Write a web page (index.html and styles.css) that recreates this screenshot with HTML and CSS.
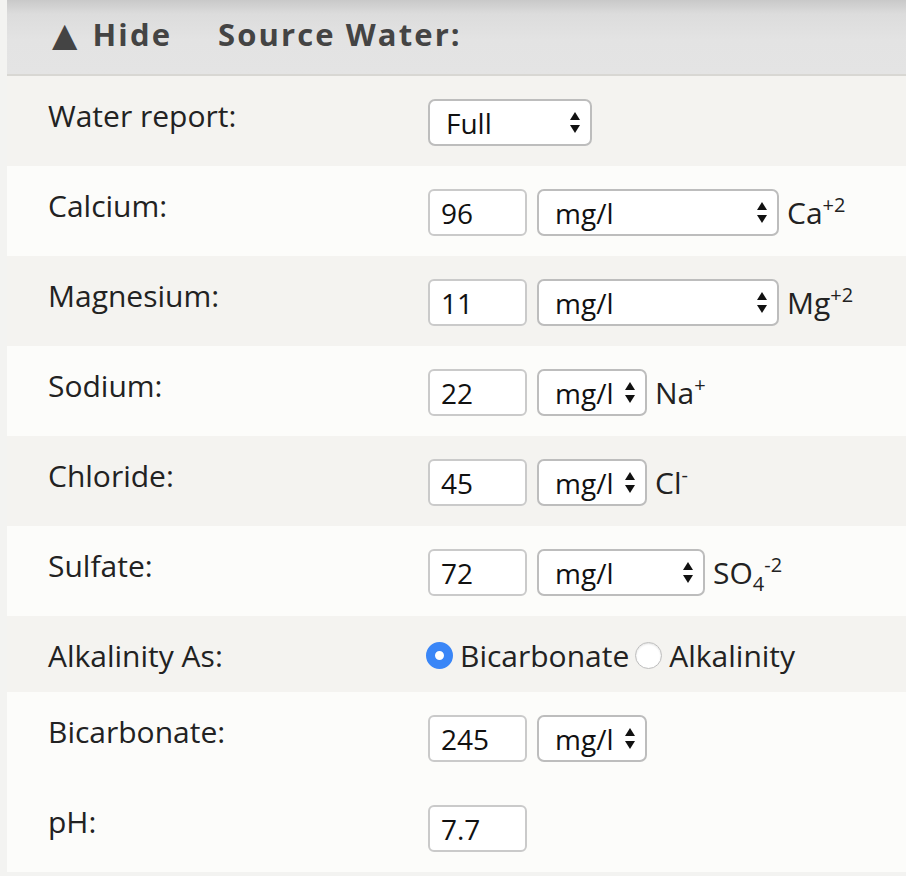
FILE: index.html
```html
<!DOCTYPE html>
<html>
<head>
<meta charset="utf-8">
<link rel="stylesheet" href="styles.css">
</head>
<body>
<div class="panel">
  <div class="header">
    <span class="toggle"><span class="tri">▲</span> Hide</span>
    <span class="title">Source Water:</span>
  </div>

  <div class="row odd">
    <div class="label">Water report:</div>
    <div class="ctrl">
      <span class="sel w-full"><select><option>Full</option></select><svg class="arr" viewBox="0 0 10 21"><path d="M5 0 L10 8 L0 8 Z M0 13 L10 13 L5 21 Z"/></svg></span>
    </div>
  </div>

  <div class="row even">
    <div class="label">Calcium:</div>
    <div class="ctrl">
      <input class="num" type="text" value="96">
      <span class="sel w-long"><select><option>mg/l</option></select><svg class="arr" viewBox="0 0 10 21"><path d="M5 0 L10 8 L0 8 Z M0 13 L10 13 L5 21 Z"/></svg></span>
      <span class="ion">Ca<sup>+2</sup></span>
    </div>
  </div>

  <div class="row odd">
    <div class="label">Magnesium:</div>
    <div class="ctrl">
      <input class="num" type="text" value="11">
      <span class="sel w-long"><select><option>mg/l</option></select><svg class="arr" viewBox="0 0 10 21"><path d="M5 0 L10 8 L0 8 Z M0 13 L10 13 L5 21 Z"/></svg></span>
      <span class="ion">Mg<sup>+2</sup></span>
    </div>
  </div>

  <div class="row even">
    <div class="label">Sodium:</div>
    <div class="ctrl">
      <input class="num" type="text" value="22">
      <span class="sel w-short"><select><option>mg/l</option></select><svg class="arr" viewBox="0 0 10 21"><path d="M5 0 L10 8 L0 8 Z M0 13 L10 13 L5 21 Z"/></svg></span>
      <span class="ion">Na<sup>+</sup></span>
    </div>
  </div>

  <div class="row odd">
    <div class="label">Chloride:</div>
    <div class="ctrl">
      <input class="num" type="text" value="45">
      <span class="sel w-short"><select><option>mg/l</option></select><svg class="arr" viewBox="0 0 10 21"><path d="M5 0 L10 8 L0 8 Z M0 13 L10 13 L5 21 Z"/></svg></span>
      <span class="ion">Cl<sup>-</sup></span>
    </div>
  </div>

  <div class="row even">
    <div class="label">Sulfate:</div>
    <div class="ctrl">
      <input class="num" type="text" value="72">
      <span class="sel w-mid"><select><option>mg/l</option></select><svg class="arr" viewBox="0 0 10 21"><path d="M5 0 L10 8 L0 8 Z M0 13 L10 13 L5 21 Z"/></svg></span>
      <span class="ion">SO<sub>4</sub><sup>-2</sup></span>
    </div>
  </div>

  <div class="row odd short">
    <div class="label">Alkalinity As:</div>
    <div class="ctrl radios">
      <label class="opt"><input type="radio" name="alk" checked><span>Bicarbonate</span></label>
      <label class="opt"><input type="radio" name="alk"><span>Alkalinity</span></label>
    </div>
  </div>

  <div class="row even">
    <div class="label">Bicarbonate:</div>
    <div class="ctrl">
      <input class="num" type="text" value="245">
      <span class="sel w-short"><select><option>mg/l</option></select><svg class="arr" viewBox="0 0 10 21"><path d="M5 0 L10 8 L0 8 Z M0 13 L10 13 L5 21 Z"/></svg></span>
    </div>
  </div>

  <div class="row even">
    <div class="label">pH:</div>
    <div class="ctrl">
      <input class="num" type="text" value="7.7">
    </div>
  </div>
</div>
</body>
</html>
```

FILE: styles.css
```css
html, body {
  margin: 0;
  padding: 0;
}
body {
  background: #f3f3f1;
  font-family: "Open Sans", "Liberation Sans", sans-serif;
  color: #222;
  width: 906px;
  height: 876px;
  overflow: hidden;
}
.panel {
  margin-left: 7px;
  background: #fcfcfa;
}
.header {
  box-sizing: border-box;
  height: 76px;
  border-bottom: 2px solid #d8d7d3;
  background: linear-gradient(#c9c9c9 0, #dcdcdc 14px, #e3e3e3 40px, #e4e4e4 100%);
  display: flex;
  align-items: center;
  padding: 0 0 6px 45px;
  color: #444;
  font-weight: 700;
  font-size: 31px;
  letter-spacing: 2.1px;
}
.toggle {
  margin-right: 46px;
}
.tri {
  font-family: "DejaVu Sans", sans-serif;
  font-size: 33px;
  letter-spacing: 0;
  margin-right: 5px;
}
.row {
  display: grid;
  grid-template-columns: 380px 1fr;
  padding: 23px 0 20px 41px;
  height: 90px;
  box-sizing: border-box;
}
.row.short {
  height: 76px;
}
.odd {
  background: #f4f3f0;
}
.even {
  background: #fcfcfa;
}
.label {
  font-size: 30px;
  line-height: 34px;
  color: #222;
}
.ctrl {
  display: flex;
  align-items: center;
  height: 47px;
  font-size: 30px;
}
.num {
  width: 99px;
  height: 47px;
  box-sizing: border-box;
  border: 2px solid #cacaca;
  border-radius: 6px;
  background: #fff;
  font-family: "Open Sans", "Liberation Sans", sans-serif;
  font-size: 28px;
  color: #111;
  padding: 0 0 0 11px;
  margin: 0 10px 0 0;
  outline: none;
}
.sel {
  position: relative;
  display: inline-block;
  height: 47px;
}
.sel select {
  -webkit-appearance: none;
  appearance: none;
  width: 100%;
  height: 47px;
  box-sizing: border-box;
  border: 2px solid #bdbdbd;
  border-radius: 7px;
  background: #fff;
  font-family: "Open Sans", "Liberation Sans", sans-serif;
  font-size: 28px;
  color: #111;
  padding: 0 30px 0 16px;
  margin: 0;
  outline: none;
}
.arr {
  position: absolute;
  top: 13px;
  right: 12px;
  width: 10px;
  height: 21px;
  fill: #111;
}
.w-full { width: 164px; }
.w-long { width: 242px; }
.w-short { width: 110px; }
.w-mid { width: 168px; }
.ion {
  margin-left: 8px;
  font-size: 30px;
  color: #222;
  line-height: 1;
}
.ion sup {
  font-size: 20px;
  vertical-align: 12px;
  line-height: 0;
}
.ion sub {
  font-size: 20px;
  vertical-align: -7px;
  line-height: 0;
}
.radios {
  height: 33px;
  margin-left: -2px;
}
.opt {
  display: flex;
  align-items: center;
  font-size: 30px;
  color: #222;
}
.opt input {
  -webkit-appearance: none;
  appearance: none;
  width: 27px;
  height: 27px;
  border-radius: 50%;
  margin: 0 7px 0 0;
  box-sizing: border-box;
  border: 1px solid #bdbdbd;
  background: #fff;
  box-shadow: inset 0 1px 2px rgba(0,0,0,0.12);
}
.opt input:checked {
  border: 9.5px solid #3a86f7;
  background: #fff;
  box-shadow: none;
}
.opt + .opt {
  margin-left: 6px;
}
```
